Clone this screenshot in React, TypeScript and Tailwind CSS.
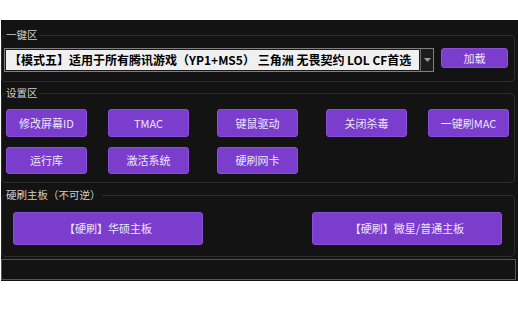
const font = "font-['Microsoft_YaHei','Noto_Sans_CJK_SC',sans-serif]";

function PurpleButton({ label, className }: { label: string; className: string }) {
  return (
    <button
      className={`flex items-center justify-center rounded-[3px] bg-[#7a3dcc] border border-[#8a4fd8] text-[11px] text-[#ece6f7] ${className}`}
    >
      {label}
    </button>
  );
}

function Group({ title, className, children }: { title: string; className: string; children: React.ReactNode }) {
  return (
    <div className={`relative rounded-[4px] border border-[#2c2c2c] ${className}`}>
      <span className="absolute left-[3px] top-[-7px] bg-[#131313] px-[1px] text-[10.5px] leading-[12px] text-[#cfcfcf]">
        {title}
      </span>
      {children}
    </div>
  );
}

export default function App() {
  const row1 = ["修改屏幕ID", "TMAC", "键鼠驱动", "关闭杀毒", "一键刷MAC"];
  const row2 = ["运行库", "激活系统", "硬刷网卡"];
  const gaps = ["ml-0", "ml-[21px]", "ml-[28px]", "ml-[28px]", "ml-[21px]"];

  return (
    <div className={`w-[518px] h-[324px] bg-white pt-[20px] pl-[1px] ${font}`}>
      <div className="w-[517px] h-[261px] bg-[#131313] flex flex-col">
        <Group title="一键区" className="mt-[15px] w-[514px] h-[47px] pt-[12px] pl-[2px]">
          <div className="flex items-start">
            <div className="flex h-[24px] w-[430px] border border-[#808080]">
              <div className="flex-1 overflow-hidden whitespace-nowrap border border-[#1a1a1a] bg-[#f0f0f0] pl-[3px] text-[12px] font-bold leading-[20px] text-black">
                【模式五】适用于所有腾讯游戏（YP1+MS5） 三角洲 无畏契约 LOL CF首选
              </div>
              <div className="flex w-[13px] items-center justify-center bg-[#1c1c1c] border-l border-[#6a6a6a]">
                <svg width="7" height="4" viewBox="0 0 7 4">
                  <path d="M0 0 L7 0 L3.5 4 Z" fill="#9a9a9a" />
                </svg>
              </div>
            </div>
            <PurpleButton label="加载" className="ml-[7px] w-[67px] h-[20px]" />
          </div>
        </Group>

        <Group title="设置区" className="mt-[11px] w-[514px] h-[90px] pt-[15px] pl-[4px]">
          <div className="flex">
            {row1.map((t, i) => (
              <PurpleButton key={t} label={t} className={`w-[81px] h-[28px] ${gaps[i]}`} />
            ))}
          </div>
          <div className="flex mt-[10px]">
            {row2.map((t, i) => (
              <PurpleButton key={t} label={t} className={`w-[81px] h-[27px] ${gaps[i]}`} />
            ))}
          </div>
        </Group>

        <Group title="硬刷主板（不可逆）" className="mt-[12px] w-[514px] h-[62px] pt-[16px] pl-[11px]">
          <div className="flex">
            <PurpleButton label="【硬刷】华硕主板" className="w-[190px] h-[33px]" />
            <PurpleButton label="【硬刷】微星/普通主板" className="ml-[109px] w-[190px] h-[33px]" />
          </div>
        </Group>

        <div className="mt-[2px] w-[515px] h-[21px] border border-[#6b35b8] bg-[#131313]" />
      </div>
    </div>
  );
}
